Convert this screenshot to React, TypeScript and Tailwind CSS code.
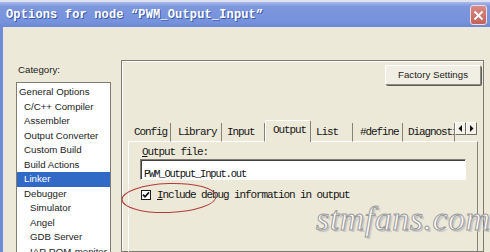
const CATEGORIES = [
  { label: "General Options", level: 0 },
  { label: "C/C++ Compiler", level: 1 },
  { label: "Assembler", level: 1 },
  { label: "Output Converter", level: 1 },
  { label: "Custom Build", level: 1 },
  { label: "Build Actions", level: 1 },
  { label: "Linker", level: 1, selected: true },
  { label: "Debugger", level: 1 },
  { label: "Simulator", level: 2 },
  { label: "Angel", level: 2 },
  { label: "GDB Server", level: 2 },
  { label: "IAR ROM-monitor", level: 2 },
];

const INDENT = ["pl-[2px]", "pl-[7px]", "pl-[13px]"];

const TABS = [
  { label: "Config", width: "w-[42px]", pad: "pl-[5px]" },
  { label: "Library", width: "w-[51px]", pad: "pl-[7px]" },
  { label: "Input", width: "w-[43px]", pad: "pl-[5px]" },
  { label: "Output", width: "w-[46px]", pad: "pl-[7px]", selected: true },
  { label: "List", width: "w-[42px]", pad: "pl-[5px]" },
  { label: "#define", width: "w-[50px]", pad: "pl-[7px]" },
  { label: "Diagnostics", width: "w-[52px]", pad: "pl-[5px]" },
];

const MONO = "font-['Liberation_Mono',monospace] text-[11px] tracking-[-1.1px] text-[#161616]";

export default function App() {
  return (
    <div className="relative w-[490px] h-[252px] overflow-hidden bg-[#ece9d8] font-['Liberation_Sans',Arial,sans-serif]">
      <TitleBar />
      <div className="flex h-[225px] border-l-[3px] border-[#6d8bd6]">
        {/* category list */}
        <div className="w-[118px] shrink-0 pl-[13px] pt-[36px]">
          <div className="h-[19px] pl-[2px] text-[9.7px] leading-[14px] text-[#222]">Category:</div>
          <div className="w-[95px] h-[200px] border border-[#7f7d74] bg-white pt-[2px]">
            {CATEGORIES.map((c) => (
              <div
                key={c.label}
                className={`h-[14.5px] text-[9.7px] leading-[14.5px] whitespace-nowrap ${INDENT[c.level]} ${
                  c.selected ? "bg-[#3169c6] text-white" : "text-[#1c1c1c]"
                }`}
              >
                {c.label}
              </div>
            ))}
          </div>
        </div>

        {/* options group */}
        <div className="flex-1 pt-[33px] pr-[6px]">
          <div className="h-full border border-[#7d7b72] shadow-[inset_1px_1px_0_#fff]">
            <div className="flex justify-end pt-[4px] pr-[2px]">
              <button className="w-[96px] h-[20px] rounded-[2px] border border-[#8c8a82] border-t-white border-l-white bg-[#f1efe4] shadow-[1px_1px_0_#5f5e58] text-[9.7px] text-[#1c1c1c]">
                Factory Settings
              </button>
            </div>

            <div className="mt-[36px] ml-[6px] mr-[5px]">
              <TabRow />
              <div className="h-[120px] border-t border-l border-white border-r border-r-[#858379]">
                <div className={`${MONO} mt-[4px] ml-[13px] leading-[12px]`}>
                  <span className="underline">O</span>utput file:
                </div>
                <div className="mt-[1px] ml-[11px] mr-[11px] h-[21px] border border-[#7f7d74] border-b-white border-r-white shadow-[inset_1px_1px_0_#404040] bg-white pl-[3px]">
                  <span className="font-['Liberation_Mono',monospace] text-[10.5px] tracking-[-1.2px] leading-[19px] text-[#111]">
                    PWM_Output_Input.out
                  </span>
                </div>
                <div className="mt-[9px] ml-[12px] flex items-center gap-[6px] h-[12px]">
                  <div className="w-[10px] h-[10px] border border-[#1c1c1c] bg-white flex items-center justify-center">
                    <svg width="8" height="8" viewBox="0 0 8 8">
                      <path d="M1 3.6 L3 5.8 L7 1.4" stroke="#111" strokeWidth="1.7" fill="none" />
                    </svg>
                  </div>
                  <span className={`${MONO} leading-[12px]`}>
                    <span className="underline">I</span>nclude debug information in output
                  </span>
                </div>
              </div>
            </div>
          </div>
        </div>
      </div>

      {/* watermark */}
      <div className="absolute left-[316px] top-[199px] font-['Liberation_Serif',serif] italic text-[34px] leading-[40px] tracking-[0.5px] text-[#fbfbfb] [-webkit-text-stroke:1px_#9c9c9c] [text-shadow:2px_2px_1px_#c4c4c4]">
        stmfans.com
      </div>

      {/* annotation ellipse */}
      <svg className="absolute left-[120px] top-[181px]" width="100" height="34" viewBox="0 0 100 34">
        <ellipse cx="49" cy="17" rx="47" ry="14.5" fill="none" stroke="#b33a3a" strokeWidth="1" transform="rotate(-2 49 17)" />
      </svg>
    </div>
  );
}

function TitleBar() {
  return (
    <div className="h-[27px] border-t-2 border-[#dfe2ee] bg-[linear-gradient(180deg,#a8baec_0%,#7d97de_18%,#7692dc_80%,#6b88d6_100%)] flex items-center pl-[6px] pr-[3px] pt-[1px]">
      <span className="flex-1 font-['Liberation_Mono',monospace] font-bold text-[12px] tracking-[0.15px] text-white [text-shadow:1px_1px_0_#3b58a6] whitespace-nowrap">
        Options for node “PWM_Output_Input”
      </span>
      <div className="w-[17px] h-[20px] rounded-[3px] border border-[#f2dcdc] bg-[linear-gradient(180deg,#d98a84,#c4625c)] flex items-center justify-center">
        <svg width="11" height="11" viewBox="0 0 11 11">
          <path d="M1.5 1.5 L9.5 9.5 M9.5 1.5 L1.5 9.5" stroke="#fff" strokeWidth="1.8" />
        </svg>
      </div>
    </div>
  );
}

function TabRow() {
  return (
    <div className="flex items-end h-[21px] pl-[1px] -mb-px relative">
      {TABS.map((t) =>
        t.selected ? (
          <div
            key={t.label}
            className={`${t.width} ${t.pad} h-[22px] shrink-0 bg-[#ece9d8] border-l border-white border-r border-r-[#858379] border-t border-t-white rounded-t-[2px] ${MONO} leading-[18px] whitespace-nowrap overflow-hidden relative z-10`}
          >
            {t.label}
          </div>
        ) : (
          <div
            key={t.label}
            className={`${t.width} ${t.pad} h-[19px] shrink-0 border-r border-[#858379] border-b border-b-white ${MONO} leading-[18px] whitespace-nowrap overflow-hidden`}
          >
            {t.label}
          </div>
        )
      )}
      <div className="flex self-start mt-[1px] gap-0">
        <ArrowButton dir="left" />
        <ArrowButton dir="right" />
      </div>
    </div>
  );
}

function ArrowButton({ dir }: { dir: "left" | "right" }) {
  return (
    <div className="w-[11px] h-[13px] bg-[#f3f1e8] border border-white border-r-[#6f6d66] border-b-[#6f6d66] flex items-center justify-center">
      <svg width="5" height="7" viewBox="0 0 5 7">
        <polygon points={dir === "left" ? "4,0 4,7 0.5,3.5" : "1,0 1,7 4.5,3.5"} fill="#111" />
      </svg>
    </div>
  );
}
